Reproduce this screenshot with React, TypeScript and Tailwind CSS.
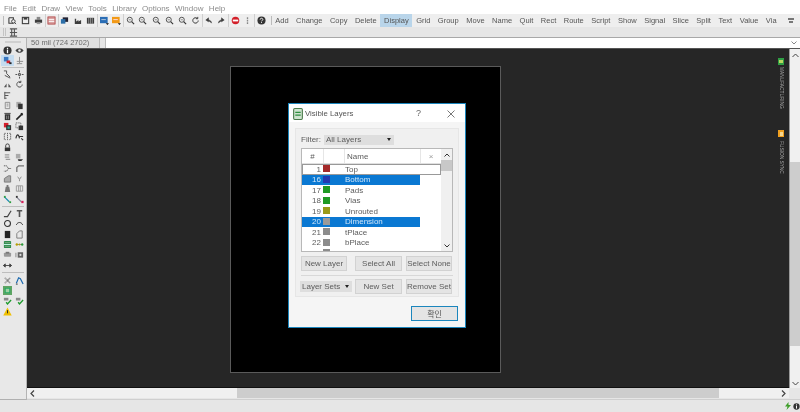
import React from "react";

const G = ({ children, w = 11, h = 11 }: { children: React.ReactNode; w?: number; h?: number }) => (
  <svg width={w} height={h} viewBox="0 0 10 10" className="block">{children}</svg>
);
const D = "#3d3d3d";
const icons: Record<string, React.ReactNode> = {
  open: <><path d="M1 2h5v2M1 2v6h5" fill="none" stroke={D} strokeWidth="1.2" /><circle cx="6" cy="6" r="2" fill="none" stroke={D} /><path d="M7 7l2 2" stroke={D} /></>,
  save: <><rect x="1.5" y="1.5" width="7" height="7" fill="none" stroke={D} strokeWidth="1.2" /><rect x="3" y="1.5" width="4" height="2.5" fill={D} /></>,
  print: <><rect x="3" y="1" width="4" height="3" fill="#888" /><rect x="1" y="4" width="8" height="3.5" fill={D} /><rect x="3" y="7" width="4" height="2" fill="#999" /></>,
  cam: <><rect x="1" y="1" width="8" height="8" fill="#d9a3a3" stroke="#a33" strokeWidth=".8" /><path d="M2 4h6M2 6h6" stroke="#fff" /></>,
  box: <><rect x="3" y="1.5" width="6" height="5" fill="#223" /><rect x="1" y="3.5" width="5" height="5" fill="#2c6fa8" /></>,
  fac: <path d="M2 9V3h1.5v3L6 4.5V6l3-1.5V9z" fill={D} />,
  lib: <><rect x="1" y="2" width="8" height="6.5" fill={D} /><path d="M3 2v6.5M5 2v6.5M7 2v6.5" stroke="#ccc" strokeWidth=".6" /></>,
  blue: <><rect x="0" y="1" width="8.5" height="7" fill="#2a6db5" /><path d="M1.5 4h5" stroke="#bcd" /><path d="M6.5 8H10l-1.750 2z" fill="#111" /></>,
  orange: <><rect x="0" y="1" width="8.5" height="7" fill="#f29a17" /><path d="M1.5 4h5" stroke="#fde" /><path d="M6.5 8H10l-1.750 2z" fill="#111" /></>,
  zoom: <><circle cx="4.2" cy="4.2" r="2.8" fill="none" stroke="#555" strokeWidth="1.1" /><path d="M6.300 6.300l2.700 2.700" stroke="#333" strokeWidth="1.3" /><path d="M3 4.200h2.400" stroke="#555" strokeWidth=".7" /></>,
  refresh: <path d="M8 5a3 3 0 1 1-1-2.300M7.5 1v2h-2" fill="none" stroke={D} strokeWidth="1.1" />,
  undo: <path d="M8.500 8C8 5 6 4 3.500 4.500M5 2L2 4.500 5 6.500z" fill={D} stroke={D} strokeWidth=".6" />,
  redo: <path d="M1.500 8C2 5 4 4 6.500 4.500M5 2l3 2.500-3 2z" fill={D} stroke={D} strokeWidth=".6" />,
  stop: <><circle cx="5" cy="5" r="4.2" fill="#d3202a" /><rect x="2" y="4" width="6" height="2" fill="#fff" /></>,
  dots: <path d="M5 1.500v2M5 4.500v1.500M5 7v2" stroke="#888" strokeWidth="1.5" />,
  help: <><circle cx="5" cy="5" r="4.5" fill="#333" /><path d="M3.500 4c0-2 3-2 3 0 0 1-1.500 1-1.500 2" fill="none" stroke="#fff" /><rect x="4.5" y="6.8" width="1" height="1" fill="#fff" /></>,
  grip: <path d="M1 1h8M1 5h8M1 9h8M3 1v8M6 1v8" stroke="#555" strokeWidth="1.2" fill="none" />,
  info: <><circle cx="5" cy="5" r="4.500" fill="#333" /><rect x="4.3" y="2" width="1.4" height="1.4" fill="#fff" /><rect x="4.3" y="4" width="1.4" height="4" fill="#fff" /></>,
  eye: <><path d="M.5 5C3 1.500 7 1.500 9.500 5 7 8.500 3 8.500.5 5z" fill="#444" /><circle cx="5" cy="5" r="1.400" fill="#eee" /></>,
  layers: <><rect x="1" y="1" width="5" height="5" fill="#3a78c0" /><rect x="4" y="5" width="4" height="3" fill="#d6202a" /><rect x="7" y="7" width="2.5" height="2" fill="#222" /></>,
  mark: <path d="M5 1v7M2 6h7M2 8.500h6" stroke="#888" strokeWidth="1" />,
  copy: <path d="M1 1h3v3M2 6l6 3M4 4l4 4" stroke="#555" strokeWidth="1.1" fill="none" />,
  move: <path d="M5 .5v2M5 7.500v2M.5 5h2M7.500 5h2M4 4h2v2H4z" stroke="#444" fill="none" />,
  mirror: <path d="M1 8l3-4v4zM9 8L6 4v4z" fill="#555" />,
  rotate: <path d="M8 5a3 3 0 1 1-1.500-2.700M6.500 .8v2h-2" fill="none" stroke="#555" strokeWidth="1.1" />,
  lines: <path d="M2 2h6M2 5h4M2 8h2M2 1v8" stroke="#555" strokeWidth="1.1" fill="none" />,
  page: <path d="M2.500 1.500h5v7h-5z M4 3.500h2M4 5.500h2" stroke="#888" fill="none" />,
  paste: <><rect x="1.5" y="1" width="5" height="6" fill="#aaa" /><rect x="3.5" y="3" width="5" height="6" fill="#333" /></>,
  trash: <><rect x="2" y="2.5" width="6" height="6.5" fill="#333" /><rect x="1.5" y="1" width="7" height="1" fill="#333" /><path d="M4 4v4M6 4v4" stroke="#ccc" strokeWidth=".6" /></>,
  wrench: <path d="M8.500 1.500L6 4 1.500 8.500M6.500 1.500l2 2" stroke="#222" strokeWidth="1.7" fill="none" />,
  red: <><rect x="1" y="1" width="5" height="5" fill="#d41f2a" /><rect x="3.5" y="3.5" width="5.5" height="5.5" fill="#333" /><rect x="5" y="5" width="2.5" height="2.5" fill="#3a9" /></>,
  group: <><rect x="1" y="1" width="5.5" height="5.5" fill="none" stroke="#444" strokeDasharray="1 1" /><rect x="4" y="4" width="5" height="5" fill="#333" /></>,
  split: <path d="M3 1.500H1.500v7H3M7 1.500h1.500v7H7M5 1v8" stroke="#555" strokeDasharray="1.5 .8" fill="none" />,
  wave: <path d="M1 7c1-5 3-5 4 0M5 5h4M7 7l2 2" stroke="#333" strokeWidth="1.3" fill="none" />,
  lock: <><path d="M3 5V3a2 2 0 0 1 4 0v2" fill="none" stroke="#333" /><rect x="2" y="5" width="6" height="4" fill="#333" /></>,
  faint: <path d="M2 2h5M2 4.500h5M3 7h5" stroke="#999" strokeWidth="1.3" />,
  stack: <><rect x="1" y="1" width="5" height="5" fill="#aaa" /><path d="M3 7h6l-2 2H4z" fill="#333" /></>,
  net: <path d="M1 2h3l2 3-2 3H1M6 5h3" stroke="#555" fill="none" strokeDasharray="1.5 .6" />,
  corner: <path d="M2 9V4l2-2h6" stroke="#777" strokeWidth="1.5" fill="none" />,
  poly: <path d="M1.500 9V5L6 2h2.500v7z" fill="#aaa" stroke="#777" />,
  cross: <path d="M3 3l2 3 2-3M5 6v2" stroke="#888" fill="none" />,
  part: <path d="M2 9l1-6h4l1 6zM4 3V1h2v2" fill="#777" />,
  chip: <path d="M1.500 2h7v6h-7zM4 2v6M6 2v6" stroke="#999" fill="none" />,
  route: <><path d="M1.500 2L7 7.500" stroke="#1a8bb0" strokeWidth="1.3" /><rect x="1" y="1" width="2" height="2" fill="#2a9c3c" /><rect x="7" y="7" width="2" height="2" fill="#2a9c3c" /></>,
  route2: <><path d="M1.500 2L7 7.500" stroke="#8a8a9a" strokeWidth="1.3" /><rect x="1" y="1" width="2" height="2" fill="#333" /><rect x="7" y="6.5" width="2.5" height="2.5" fill="#d6205a" /></>,
  wire: <path d="M1 8.500h4L9 2" stroke="#444" strokeWidth="1.3" fill="none" />,
  text: <path d="M2 2h6M5 2v7" stroke="#555" strokeWidth="1.8" fill="none" />,
  circle: <circle cx="5" cy="5" r="3.3" fill="none" stroke="#333" strokeWidth="1.2" />,
  arc: <path d="M1.500 6.500C3 3 7 3 8.500 6.500" fill="none" stroke="#333" strokeWidth="1.1" />,
  rect: <rect x="2" y="1" width="6" height="8" fill="#222" />,
  polygon: <path d="M2 9V4l3-3h3v8z" fill="none" stroke="#777" />,
  via: <><rect x="1" y="1" width="8" height="8" rx="1" fill="#2c8c4c" /><path d="M1 5h8" stroke="#cfe" /><path d="M2 3h6M2 7h6" stroke="#8a8" /></>,
  sig: <><path d="M1 5h8" stroke="#888" /><circle cx="2" cy="5" r="1.3" fill="#b8a000" /><circle cx="8" cy="5" r="1.3" fill="#2a9c3c" /><circle cx="5" cy="5" r="1" fill="#b8a000" /></>,
  hole: <><rect x="1" y="3" width="8" height="4.5" rx="1" fill="#999" /><rect x="3" y="2" width="4" height="2" fill="#777" /></>,
  cam2: <><rect x="3" y="2.5" width="6" height="6" fill="#666" /><path d="M1 3v5" stroke="#999" strokeWidth="1.3" /><circle cx="6" cy="5.5" r="1.2" fill="#ddd" /></>,
  dim: <path d="M.5 5h9M.5 5l2-1.800v3.600zM9.500 5l-2-1.800v3.600z" stroke="#444" fill="#444" />,
  ratsnest: <path d="M2 2l3 3 3-3M2 8l3-3 3 3" stroke="#555" strokeDasharray="1 .6" fill="none" strokeWidth="1.3" />,
  auto: <><path d="M1.500 8L4 2l2 1 3 6" stroke="#1c6ab0" strokeWidth="1.3" fill="none" /><path d="M1 9h2" stroke="#333" /></>,
  green: <><rect x="0" y="0" width="10" height="10" fill="#5fa463" /><rect x="2.5" y="2.5" width="5" height="5" fill="#9fd0a0" stroke="#2a6" /></>,
  erc: <><path d="M1 2h5v3H1z" fill="#888" /><path d="M3.500 7l1.500 1.800L9 4.500" stroke="#1f9c2e" strokeWidth="1.5" fill="none" /></>,
  warn: <><path d="M5 .5L9.700 9.500H.3z" fill="#f0c000" /><path d="M5 3.500v3.500" stroke="#222" strokeWidth="1" /></>,
};

const topIcons: string[] = ["open","save","print","cam","box","fac","lib","blue","orange","zoom","zoom","zoom","zoom","zoom","refresh","undo","redo","stop","dots","help"];
const sepBefore = new Set([3, 4, 7, 9, 15, 17, 19]);

const cmds = ["Add","Change","Copy","Delete","Display","Grid","Group","Move","Name","Quit","Rect","Route","Script","Show","Signal","Slice","Split","Text","Value","Via"];
const menus = ["File","Edit","Draw","View","Tools","Library","Options","Window","Help"];

const side: ([string, string?] | "sep" | "sep2")[] = [
  ["info","eye"],["layers","mark"],"sep",["copy","move"],["mirror","rotate"],["lines"],["page","paste"],["trash","wrench"],["red","group"],["split","wave"],["lock"],["faint","stack"],["net","corner"],["poly","cross"],["part","chip"],["route","route2"],
  "sep",
  ["wire","text"],["circle","arc"],["rect","polygon"],["via","sig"],["hole","cam2"],["dim"],
  "sep2",
  ["ratsnest","auto"],["green"],["erc","erc"],["warn"],
];

const layers: [string, string, string, boolean][] = [
  ["1","#a52a2a","Top",false],
  ["16","#2238b0","Bottom",true],
  ["17","#1f9a24","Pads",false],
  ["18","#1f9a24","Vias",false],
  ["19","#9a9a18","Unrouted",false],
  ["20","#9a9a9a","Dimension",true],
  ["21","#8c8c8c","tPlace",false],
  ["22","#8c8c8c","bPlace",false],
  ["23","#8c8c8c","tOrigins",false],
];

const btn = "h-[15px] flex items-center justify-center bg-[#e4e4e4] border border-[#d2d2d2] text-[8px] text-[#5c5c5c] whitespace-nowrap";

export default function App() {
  return (
    <div className="w-[800px] h-[412px] overflow-hidden flex flex-col bg-[#e6e6e6] font-['Liberation_Sans',sans-serif] text-[#666] blur-[0.3px]">
      {/* menu */}
      <div className="h-[14px] bg-white flex items-center gap-[5.400px] pl-[4px] pt-[3px] text-[8px] text-[#8c8c8c] shrink-0">
        {menus.map((m) => <span key={m}>{m}</span>)}
      </div>
      {/* main toolbar */}
      <div className="h-[13px] bg-[#eeeeee] flex items-center shrink-0 pl-[2.5px]">
        <div className="w-px h-[9px] bg-[#bbb] mr-[2px]" />
        <div className="flex w-[265px] shrink-0">
          {topIcons.map((n, i) => (
            <div key={i} className={`w-[13.100px] h-[13px] flex items-center justify-center ${sepBefore.has(i) ? "border-l border-[#cfcfcf]" : ""}`}>
              <G w={9} h={9}>{icons[n]}</G>
            </div>
          ))}
        </div>
        <div className="w-px h-[9px] bg-[#bbb]" />
        <div className="flex items-center text-[7.500px] text-[#555] h-[13px]">
          {cmds.map((c) => (
            <span key={c} className={`px-[3.750px] h-[13px] leading-[13px] ${c === "Display" ? "bg-[#b9d5ea]" : ""}`}>{c}</span>
          ))}
        </div>
        <svg width="6" height="5" viewBox="0 0 6 5" className="ml-auto mr-[6px]"><path d="M0 0h6v2H0zM1 3h4v2H1z" fill="#777" /></svg>
      </div>
      {/* second toolbar */}
      <div className="h-[11px] bg-[#e6e6e6] flex items-center pl-[3px] gap-[3px] shrink-0 border-b border-[#a8a8a8]">
        <div className="w-[3px] h-[8px] border-x border-[#c4c4c4]" />
        <G w={9} h={9}>{icons.grip}</G>
      </div>
      {/* body */}
      <div className="flex-1 flex min-h-0">
        <div className="w-[27px] shrink-0 flex flex-col bg-[#e8e8e8] border-r border-[#b4b4b4] border-b border-b-[#b0b0b0] self-stretch">
          <div className="h-[7px] flex items-center justify-center shrink-0"><div className="w-[16px] h-[2px] bg-[#d0d0d0]" /></div>
          <div className="flex flex-col flex-1">
            {side.map((r, i) =>
              r === "sep" || r === "sep2" ? (
                <div key={i} className={`${r === "sep" ? "h-[3.600px]" : "h-[4.600px]"} mx-[2px] flex items-center shrink-0`}><div className="w-full h-px bg-[#bdbdbd]" /></div>
              ) : (
                <div key={i} className="h-[10.400px] flex pl-[1px] shrink-0">
                  {r.map((n, j) => (
                    <div key={j} className={`w-[12.500px] h-[10.400px] flex items-center justify-center ${n === "layers" ? "bg-[#c4dcf0]" : ""}`}>
                      {n ? <G w={9} h={9}>{icons[n]}</G> : null}
                    </div>
                  ))}
                </div>
              )
            )}
          </div>
        </div>
        <div className="flex-1 flex flex-col min-w-0">
          {/* coord row */}
          <div className="h-[11px] flex shrink-0 border-b border-[#555] bg-[#e6e6e6]">
            <div className="w-[73px] text-[7.500px] leading-[10px] pl-[4px] text-[#6c6c6c] bg-[#e0e0e0] border-r border-[#bbb]">50 mil (724 2702)</div>
            <div className="w-[6px] border-r border-[#bbb]" />
            <div className="flex-1 bg-white flex items-center justify-end pr-[3px]">
              <svg width="6" height="4" viewBox="0 0 6 4"><path d="M.5.500L3 3 5.500.500" fill="none" stroke="#888" /></svg>
            </div>
          </div>
          <div className="flex-1 flex min-h-0">
            {/* canvas */}
            <div className="relative flex-1 bg-[#262626] border-b border-[#111]">
              <div className="w-[271px] h-[307px] ml-[203px] mt-[17px] bg-black border border-[#5a5a5a]" />
              {/* side tabs */}
              <div className="absolute left-[751px] top-[9px] flex flex-col items-center w-[6px]">
                <div className="w-[6px] h-[7px] bg-[#2f9e44] flex items-center justify-center"><div className="w-[4px] h-[3px] bg-[#b8d860]" /></div>
                <div className="h-[40px] mt-[2px] flex justify-center">
                  <span className="text-[4.800px] leading-[6px] text-[#aaaaaa] [writing-mode:vertical-rl] whitespace-nowrap">MANUFACTURING</span>
                </div>
                <div className="mt-[23px] w-[6px] h-[7px] bg-[#f0a020] flex items-center justify-center"><div className="w-[3px] h-[4px] bg-[#f8d890]" /></div>
                <span className="mt-[4px] text-[4.800px] leading-[6px] text-[#aaaaaa] [writing-mode:vertical-rl] whitespace-nowrap">FUSION SYNC</span>
              </div>
              {/* dialog */}
              <div className="absolute left-[261px] top-[54px] w-[178px] h-[225px] bg-[#f5f5f5] border border-[#1b86bd] flex flex-col">
                <div className="h-[18px] bg-white flex items-center shrink-0 pl-[4px] pt-[1px]">
                  <svg width="10" height="12" viewBox="0 0 9 11"><rect x=".5" y=".5" width="8" height="10" rx="1" fill="#cfe3cf" stroke="#4a7a4a" /><path d="M2 4h5M2 6.500h5" stroke="#2f8f3f" strokeWidth="1.2" /></svg>
                  <span className="ml-[2px] text-[7.800px] text-[#555]">Visible Layers</span>
                  <span className="ml-auto text-[9px] text-[#666] mr-[26px]">?</span>
                  <svg width="8" height="8" viewBox="0 0 8 8" className="mr-[10px]"><path d="M.5.500l7 7M7.500.500l-7 7" stroke="#555" strokeWidth=".8" /></svg>
                </div>
                <div className="mx-[6px] mt-[6px] h-[169px] border border-[#e6e6e6] bg-[#f0f0f0] flex flex-col px-[5px] shrink-0">
                  <div className="flex items-center h-[13px] mt-[4px] shrink-0">
                    <span className="text-[8px] text-[#5c5c5c] w-[23px]">Filter:</span>
                    <div className="w-[70px] h-[10px] bg-[#dedede] flex items-center justify-between pl-[2px] pr-[3px] text-[8px] text-[#5c5c5c] leading-[10px]">
                      All Layers
                      <svg width="4" height="3" viewBox="0 0 4 3"><path d="M0 0h4L2 3z" fill="#222" /></svg>
                    </div>
                  </div>
                  <div className="mt-[2px] h-[104px] w-[152px] bg-white border border-[#b8b8b8] flex shrink-0 overflow-hidden">
                    <div className="flex-1 min-w-0 flex flex-col overflow-hidden">
                      <div className="h-[15px] flex items-center shrink-0 text-[8px] text-[#5c5c5c] border-b border-[#e0e0e0]">
                        <div className="w-[22px] text-center border-r border-[#e6e6e6] h-full leading-[15px]">#</div>
                        <div className="w-[21px] border-r border-[#e6e6e6] h-full" />
                        <div className="w-[76px] pl-[2px] border-r border-[#e6e6e6] h-full leading-[15px]">Name</div>
                        <div className="flex-1 text-center text-[#999] leading-[15px]">×</div>
                      </div>
                      {layers.map(([n, col, name, sel], i) => (
                        <div key={n} className={`shrink-0 flex items-center text-[8px] leading-[10px] h-[10.500px] ${i === 0 ? "outline outline-1 -outline-offset-1 outline-[#999]" : ""} ${sel ? "bg-[#0a78d2] w-[118px] text-[#cfe6fa]" : "text-[#5c5c5c]"}`}>
                          <div className="w-[19px] text-right pt-[1px]">{n}</div>
                          <div className="w-[7px] h-[7px] ml-[2px] mb-[1px]" style={{ background: col }} />
                          <div className="ml-[15px] pt-[1px]">{name}</div>
                        </div>
                      ))}
                    </div>
                    <div className="w-[11px] flex flex-col items-center bg-[#f0f0f0] shrink-0">
                      <div className="h-[11px] flex items-center"><svg width="6" height="4" viewBox="0 0 6 4"><path d="M.5 3.500L3 1l2.500 2.500" fill="none" stroke="#333" /></svg></div>
                      <div className="w-full h-[11px] bg-[#c8c8c8]" />
                      <div className="mt-auto h-[11px] flex items-center"><svg width="6" height="4" viewBox="0 0 6 4"><path d="M.5.500L3 3l2.500-2.500" fill="none" stroke="#333" /></svg></div>
                    </div>
                  </div>
                  <div className="flex mt-[4px] shrink-0">
                    <div className={`${btn} w-[46px]`}>New Layer</div>
                    <div className={`${btn} w-[47px] ml-[8px]`}>Select All</div>
                    <div className={`${btn} w-[46px] ml-[4px]`}>Select None</div>
                  </div>
                  <div className="h-px bg-[#d8d8d8] mt-[4px] shrink-0" />
                  <div className="flex items-center mt-[3px] shrink-0">
                    <div className="w-[52px] h-[11px] -ml-[1px] bg-[#dedede] flex items-center justify-between pl-[2px] pr-[3px] text-[8px] leading-[11px] text-[#5c5c5c]">
                      Layer Sets
                      <svg width="4" height="3" viewBox="0 0 4 3"><path d="M0 0h4L2 3z" fill="#222" /></svg>
                    </div>
                    <div className={`${btn} w-[47px] ml-[3px]`}>New Set</div>
                    <div className={`${btn} w-[46px] ml-[4px]`}>Remove Set</div>
                  </div>
                </div>
                <div className="flex justify-end mt-[9px] pr-[7px]">
                  <div className="w-[47px] h-[15px] bg-[#e4e4e4] border border-[#1b86bd] flex items-center justify-center text-[8px] text-[#555] font-['Noto_Sans_CJK_KR','Noto_Sans',sans-serif]">확인</div>
                </div>
              </div>
            </div>
            {/* right scrollbar */}
            <div className="w-[11px] bg-[#f0f0f0] border-l border-[#999] flex flex-col shrink-0">
              <div className="h-[113px] pt-[4px] flex justify-center shrink-0"><svg width="7" height="5" viewBox="0 0 7 5"><path d="M.5 4L3.500 1l3 3" fill="none" stroke="#444" /></svg></div>
              <div className="h-[184px] bg-[#cdcdcd] shrink-0" />
              <div className="flex-1 flex items-end justify-center pb-[2px]"><svg width="7" height="5" viewBox="0 0 7 5"><path d="M.5 1l3 3 3-3" fill="none" stroke="#444" /></svg></div>
            </div>
          </div>
          {/* bottom scrollbar */}
          <div className="h-[12px] flex shrink-0 pb-[1px] border-b border-[#cfcfcf]">
            <div className="w-[210px] bg-[#f0f0f0] flex items-center pl-[3px] shrink-0"><svg width="5" height="7" viewBox="0 0 5 7"><path d="M4 .5l-3 3 3 3" fill="none" stroke="#444" strokeWidth="1.2" /></svg></div>
            <div className="w-[482px] bg-[#cdcdcd] shrink-0" />
            <div className="w-[70px] bg-[#f0f0f0] flex items-center justify-end pr-[3px] shrink-0"><svg width="5" height="7" viewBox="0 0 5 7"><path d="M1 .5l3 3-3 3" fill="none" stroke="#444" strokeWidth="1.2" /></svg></div>
            <div className="flex-1 bg-[#e6e6e6]" />
          </div>
        </div>
      </div>
      {/* status */}
      <div className="h-[12px] bg-[#e6e6e6] flex items-center justify-end shrink-0 gap-[2px]">
        <svg width="6" height="8" viewBox="0 0 6 8"><path d="M3.500 0L0 4.500h2.500L1.500 8 6 3H3.500z" fill="#3f9f2a" /></svg>
        <svg width="7" height="7" viewBox="0 0 10 10">{icons.info}</svg>
      </div>
    </div>
  );
}
